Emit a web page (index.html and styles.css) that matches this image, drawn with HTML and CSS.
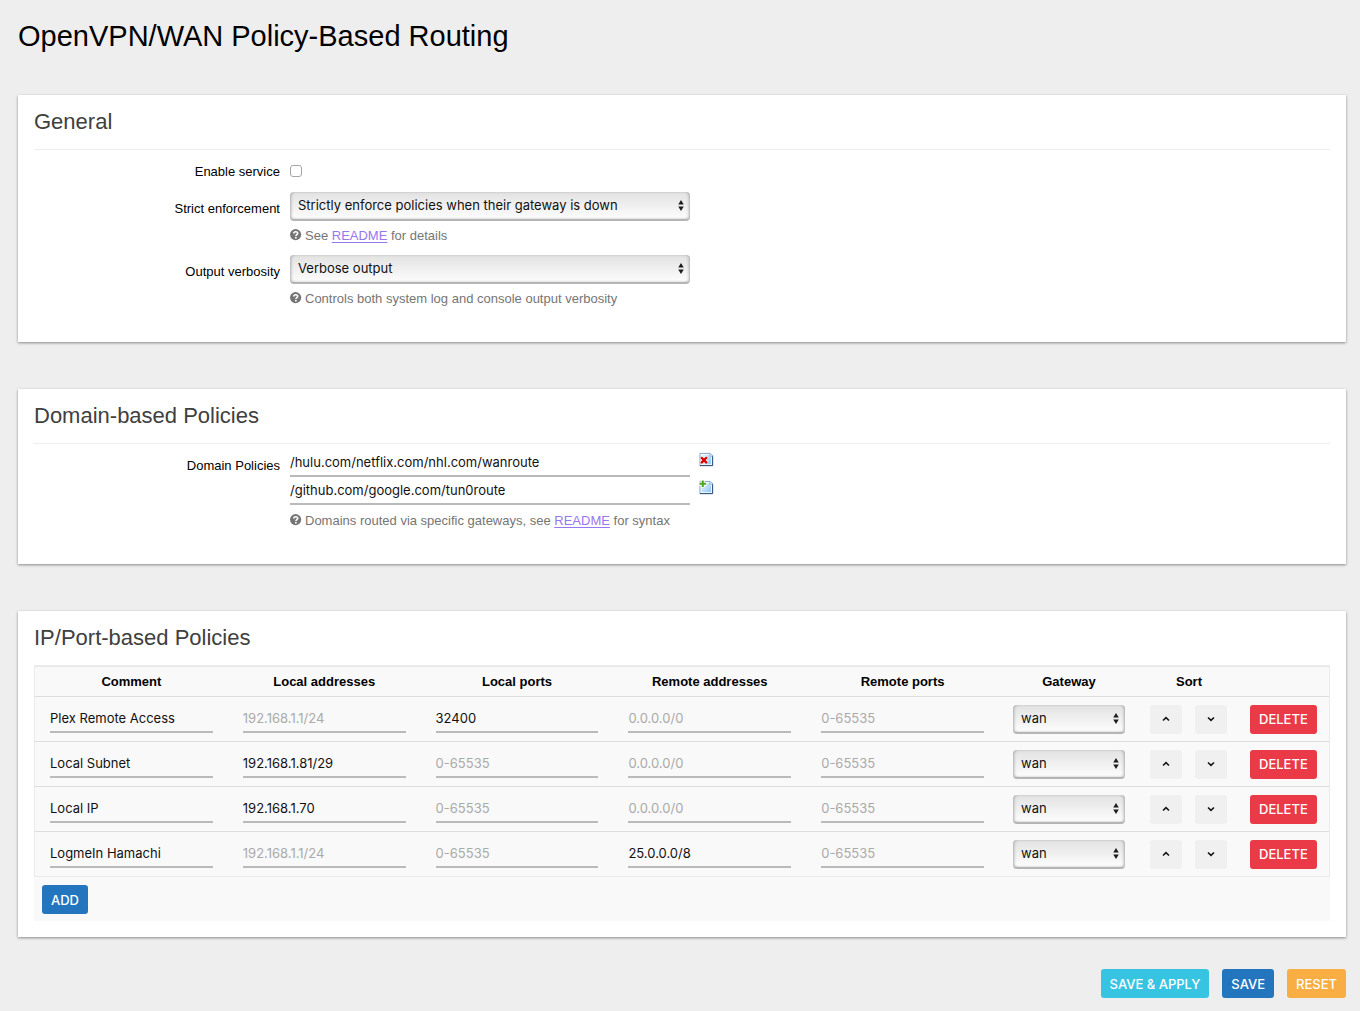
FILE: index.html
```
<!DOCTYPE html>
<html lang="en">
<head>
<meta charset="utf-8">
<title>OpenVPN/WAN Policy-Based Routing</title>
<link rel="stylesheet" href="styles.css">
</head>
<body>
<svg class="defs" aria-hidden="true">
  <symbol id="help" viewBox="0 0 12 12">
    <circle cx="5.6" cy="5.6" r="5.6" fill="#757575"/>
    <path d="M3.8 4.5C3.8 2.2 7.7 2.3 7.7 4.3C7.7 5.6 5.9 5.5 5.9 7" fill="none" stroke="#fff" stroke-width="1.6"/>
    <rect x="5" y="7.9" width="1.7" height="1.6" fill="#fff"/>
  </symbol>
  <symbol id="page" viewBox="0 0 16 16">
    <linearGradient id="sheet" x1="0" y1="0" x2="1" y2="1"><stop offset="0" stop-color="#eaf5ff"/><stop offset="1" stop-color="#8fc6f5"/></linearGradient>
    <path d="M1 1.5H12L14.5 4V14.5H1Z" fill="#fff" stroke="#7b9fc8"/>
    <path d="M14.5 4V14.5H1" fill="none" stroke="#2b4a78"/>
    <path d="M2.5 3H11.3L13 4.7V13H2.5Z" fill="url(#sheet)"/>
    <path d="M11.5 1.5V4.5H14.5" fill="#dcecfb" stroke="#7f9fc4" stroke-width=".7"/>
  </symbol>
  <symbol id="up" viewBox="0 0 8 8"><path d="M1 5.5L4 2.6L7 5.5" fill="none" stroke="#111" stroke-width="1.5"/></symbol>
  <symbol id="down" viewBox="0 0 8 8"><path d="M1 2.5L4 5.4L7 2.5" fill="none" stroke="#111" stroke-width="1.5"/></symbol>
  <symbol id="arrows" viewBox="0 0 6 12"><path d="M0 5L3 0L6 5ZM0 7H6L3 12Z" fill="#1c1c1c"/></symbol>
</svg>
<form class="page">
  <h1>OpenVPN/WAN Policy-Based Routing</h1>

  <section class="card general">
    <h2>General</h2>
    <div class="field">
      <label for="enable">Enable service</label>
      <div class="value"><input type="checkbox" id="enable" class="check"></div>
    </div>
    <div class="field">
      <label for="strict">Strict enforcement</label>
      <div class="value">
        <span class="picker"><select id="strict"><option>Strictly enforce policies when their gateway is down</option></select><svg><use href="#arrows"/></svg></span>
        <p class="hint"><svg><use href="#help"/></svg>See <a href="#readme">README</a> for details</p>
      </div>
    </div>
    <div class="field">
      <label for="verbosity">Output verbosity</label>
      <div class="value">
        <span class="picker"><select id="verbosity"><option>Verbose output</option></select><svg><use href="#arrows"/></svg></span>
        <p class="hint"><svg><use href="#help"/></svg>Controls both system log and console output verbosity</p>
      </div>
    </div>
  </section>

  <section class="card domains">
    <h2>Domain-based Policies</h2>
    <div class="field">
      <label for="domain1">Domain Policies</label>
      <div class="value">
        <div class="entry">
          <input type="text" id="domain1" value="/hulu.com/netflix.com/nhl.com/wanroute">
          <button type="button" class="icon" aria-label="Remove"><svg viewBox="0 0 16 16"><use href="#page"/><path d="M2.2 5.6L8.4 11.8M8.4 5.6L2.2 11.8" stroke="#fff" stroke-width="4"/><path d="M2.2 5.6L8.4 11.8M8.4 5.6L2.2 11.8" stroke="#d90000" stroke-width="2.6"/></svg></button>
        </div>
        <div class="entry">
          <input type="text" aria-label="Second domain policy" value="/github.com/google.com/tun0route">
          <button type="button" class="icon" aria-label="Add"><svg viewBox="0 0 16 16"><use href="#page"/><path d="M4 0V8M0 4H8" stroke="#fff" stroke-width="4"/><path d="M4 .5V7.5M.5 4H7.5" stroke="#4da81c" stroke-width="2.2"/></svg></button>
        </div>
        <p class="hint"><svg><use href="#help"/></svg>Domains routed via specific gateways, see <a href="#readme">README</a> for syntax</p>
      </div>
    </div>
  </section>

  <section class="card policies">
    <h2>IP/Port-based Policies</h2>
    <table>
      <colgroup><col span="5"><col class="col-gateway"><col class="col-sort"><col class="col-delete"></colgroup>
      <thead>
        <tr><th>Comment</th><th>Local addresses</th><th>Local ports</th><th>Remote addresses</th><th>Remote ports</th><th>Gateway</th><th>Sort</th><td></td></tr>
      </thead>
      <tbody>
        <tr>
          <td><input type="text" aria-label="Comment" value="Plex Remote Access"></td>
          <td><input type="text" aria-label="Local addresses" placeholder="192.168.1.1/24"></td>
          <td><input type="text" aria-label="Local ports" placeholder="0-65535" value="32400"></td>
          <td><input type="text" aria-label="Remote addresses" placeholder="0.0.0.0/0"></td>
          <td><input type="text" aria-label="Remote ports" placeholder="0-65535"></td>
          <td><span class="picker"><select aria-label="Gateway"><option>wan</option></select><svg><use href="#arrows"/></svg></span></td>
          <td><div class="sort"><button type="button" aria-label="Up"><svg><use href="#up"/></svg></button><button type="button" aria-label="Down"><svg><use href="#down"/></svg></button></div></td>
          <td><button type="button" class="btn red">DELETE</button></td>
        </tr>
        <tr>
          <td><input type="text" aria-label="Comment" value="Local Subnet"></td>
          <td><input type="text" aria-label="Local addresses" placeholder="192.168.1.1/24" value="192.168.1.81/29"></td>
          <td><input type="text" aria-label="Local ports" placeholder="0-65535"></td>
          <td><input type="text" aria-label="Remote addresses" placeholder="0.0.0.0/0"></td>
          <td><input type="text" aria-label="Remote ports" placeholder="0-65535"></td>
          <td><span class="picker"><select aria-label="Gateway"><option>wan</option></select><svg><use href="#arrows"/></svg></span></td>
          <td><div class="sort"><button type="button" aria-label="Up"><svg><use href="#up"/></svg></button><button type="button" aria-label="Down"><svg><use href="#down"/></svg></button></div></td>
          <td><button type="button" class="btn red">DELETE</button></td>
        </tr>
        <tr>
          <td><input type="text" aria-label="Comment" value="Local IP"></td>
          <td><input type="text" aria-label="Local addresses" placeholder="192.168.1.1/24" value="192.168.1.70"></td>
          <td><input type="text" aria-label="Local ports" placeholder="0-65535"></td>
          <td><input type="text" aria-label="Remote addresses" placeholder="0.0.0.0/0"></td>
          <td><input type="text" aria-label="Remote ports" placeholder="0-65535"></td>
          <td><span class="picker"><select aria-label="Gateway"><option>wan</option></select><svg><use href="#arrows"/></svg></span></td>
          <td><div class="sort"><button type="button" aria-label="Up"><svg><use href="#up"/></svg></button><button type="button" aria-label="Down"><svg><use href="#down"/></svg></button></div></td>
          <td><button type="button" class="btn red">DELETE</button></td>
        </tr>
        <tr>
          <td><input type="text" aria-label="Comment" value="LogmeIn Hamachi"></td>
          <td><input type="text" aria-label="Local addresses" placeholder="192.168.1.1/24"></td>
          <td><input type="text" aria-label="Local ports" placeholder="0-65535"></td>
          <td><input type="text" aria-label="Remote addresses" placeholder="0.0.0.0/0" value="25.0.0.0/8"></td>
          <td><input type="text" aria-label="Remote ports" placeholder="0-65535"></td>
          <td><span class="picker"><select aria-label="Gateway"><option>wan</option></select><svg><use href="#arrows"/></svg></span></td>
          <td><div class="sort"><button type="button" aria-label="Up"><svg><use href="#up"/></svg></button><button type="button" aria-label="Down"><svg><use href="#down"/></svg></button></div></td>
          <td><button type="button" class="btn red">DELETE</button></td>
        </tr>
      </tbody>
    </table>
    <div class="add-row"><button type="button" class="btn blue">ADD</button></div>
  </section>

  <div class="actions">
    <button type="button" class="btn cyan">SAVE &amp; APPLY</button>
    <button type="button" class="btn blue">SAVE</button>
    <button type="button" class="btn orange">RESET</button>
  </div>
</form>
</body>
</html>
```
FILE: styles.css
```
* { box-sizing: border-box; }

body {
  margin: 0;
  background: #eee;
  color: #000;
  font: 13px/18px "Liberation Sans", Arial, sans-serif;
}

.defs { position: absolute; width: 0; height: 0; }

.page { padding: 16px 14px 13px 18px; }

h1 {
  margin: 0 0 39px;
  font-size: 29px;
  line-height: 40px;
  font-weight: 400;
}

.card {
  margin-bottom: 47px;
  padding: 0 16px 16px;
  background: #fff;
  box-shadow: 0 1px 3px rgba(0, 0, 0, .26), 0 1px 2px rgba(0, 0, 0, .2);
}

h2 {
  margin: 0 0 8px;
  padding: 12px 0 13px;
  border-bottom: 1px solid #eee;
  color: #404040;
  font-size: 22px;
  line-height: 29px;
  font-weight: 400;
}

.general { padding-bottom: 25px; }
.domains { padding-bottom: 26px; }
.policies { margin-bottom: 32px; }
.policies h2 { margin: 0; border-bottom: 0; }

.field {
  display: flex;
  gap: 10px;
  margin-bottom: 8px;
}
.field > label {
  width: 246px;
  padding-top: 5px;
  text-align: right;
}
.value { padding-top: 1px; }

.check {
  appearance: none;
  display: block;
  width: 12px;
  height: 12px;
  margin: 6px 0;
  border: 1px solid #a5a5a5;
  border-radius: 3px;
  background: #fff;
}

.general .field + .field { margin-bottom: 9px; }
.general .field + .field > label { padding-top: 9px; }

input[type="text"], select, .btn {
  font: 13px/18px Inter, "Liberation Sans", sans-serif;
}

input[type="text"] {
  display: block;
  width: 100%;
  height: 28px;
  padding: 0 0 1px;
  border: 0;
  border-bottom: 2px solid #bababa;
  border-radius: 0;
  background: transparent;
  color: #111;
}
input::placeholder { color: #aaa; opacity: 1; }

.picker {
  display: block;
  position: relative;
}
.value .picker { width: 400px; }
.picker svg {
  position: absolute;
  top: 8px;
  right: 6px;
  width: 6px;
  height: 11px;
  pointer-events: none;
}
select {
  appearance: none;
  display: block;
  width: 100%;
  height: 29px;
  padding: 0 8px 1px;
  border: 0;
  border-bottom: 2px solid #b5b5b5;
  border-radius: 4px;
  background: linear-gradient(#e2e2e2, #fdfdfd);
  box-shadow: inset 2px 0 3px -1px #aaa, inset -2px 0 3px -1px #aaa;
  color: #111;
}

.hint {
  display: flex;
  align-items: center;
  white-space: pre;
  margin: 6px 0 0;
  color: #757575;
}
.hint svg { width: 12px; height: 12px; margin: 0 3px 2px 0; }
a { color: #9877ee; text-underline-offset: 2px; }

.entry {
  display: flex;
  gap: 9px;
}
.entry input[type="text"] { width: 400px; }
.icon {
  width: 15px;
  height: 15px;
  margin-top: 3px;
  padding: 0;
  border: 0;
  background: none;
}
.icon svg { display: block; width: 15px; height: 15px; }
.domains .value { padding-top: 0; }
.domains .field > label { padding-top: 8px; }
.domains h2 { margin-bottom: 5px; }
.domains .hint { margin-top: 7px; }

table {
  width: 100%;
  table-layout: fixed;
  border-collapse: separate;
  border-spacing: 0;
  border: 1px solid #eaeaea;
  border-top-width: 2px;
  background: #f9f9f9;
}
.col-gateway { width: 140px; }
.col-sort { width: 100px; }
.col-delete { width: 90px; }
th { height: 29px; padding: 0; text-align: center; }
tbody td {
  height: 45px;
  padding: 0 15px;
  border-top: 1px solid #ddd;
}
tbody td:nth-child(6) { padding: 0 14px; }
tbody td:nth-child(7), tbody td:nth-child(8) { padding: 0 11px; }

.sort { display: flex; gap: 13px; }
.sort button {
  width: 32px;
  height: 29px;
  padding: 0;
  border: 0;
  border-radius: 3px;
  background: #f0f0f0;
}
.sort svg { display: block; width: 8px; height: 8px; margin: 0 auto; }

.btn {
  display: block;
  height: 29px;
  padding: 0 9px;
  border: 0;
  border-radius: 3px;
  color: #fff;
  font-weight: 500;
}
.red { background: #ea3a47; }
.blue { background: #2376bd; }
.cyan { background: #36c4e2; }
.orange { background: #f8ae42; }

.add-row { padding: 8px 8px 7px; background: #f9f9f9; }
.actions { display: flex; justify-content: flex-end; gap: 13px; }
```
